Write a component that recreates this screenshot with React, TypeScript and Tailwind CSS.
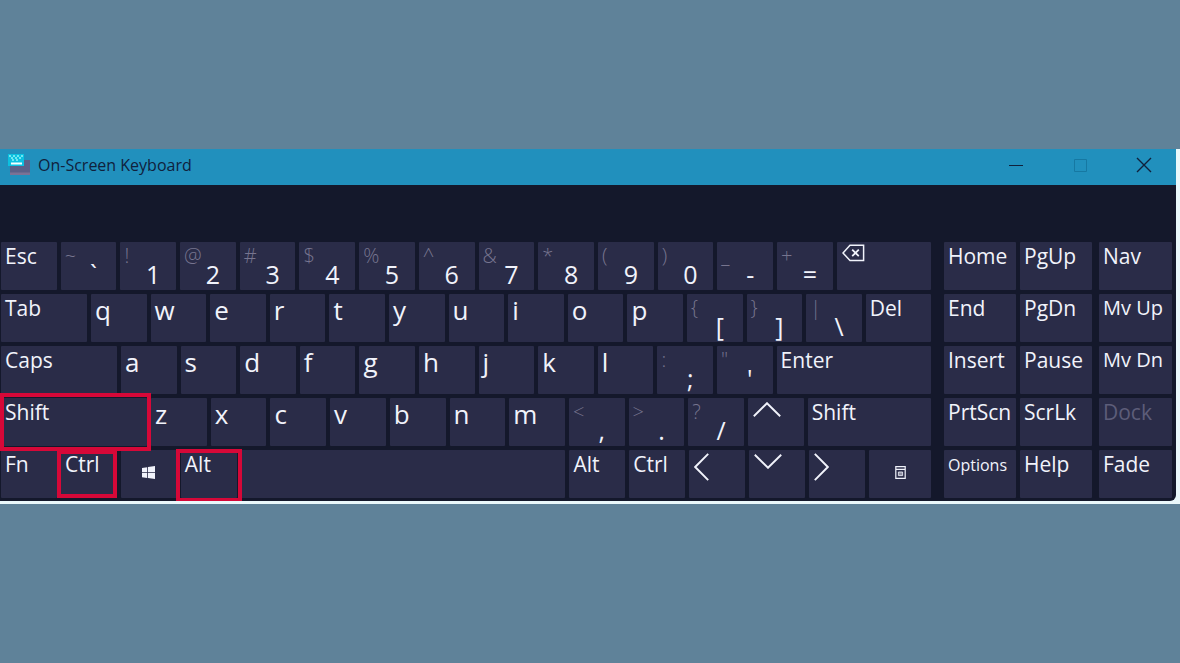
import type { ReactNode } from 'react'
import clsx from 'clsx'

interface KeyDef {
  label?: string
  hint?: string
  icon?: ReactNode
  name?: string
  size?: 'letter' | 'label' | 'medium' | 'small'
  mark?: string
  center?: boolean
  disabled?: boolean
}

const sizes = {
  letter: 'text-[26px] leading-8',
  label: 'text-[21px] leading-7',
  medium: 'text-[20px] leading-7',
  small: 'text-[16px] leading-[30px]',
}

const letters = (text: string): KeyDef[] => text.split('').map((label) => ({ label, size: 'letter' }))

const pairs = (text: string): KeyDef[] => text.split(' ').map((p) => ({ hint: p[0], label: p[1] }))

function Chevron({ d, wide }: { d: string; wide?: boolean }) {
  return (
    <svg
      className={wide ? 'mt-1 ml-px h-[15px] w-7' : 'mt-[3px] ml-px h-7 w-[15px]'}
      viewBox={wide ? '0 0 28 15' : '0 0 15 28'}
      fill="none"
      stroke="currentColor"
      strokeWidth={1.9}
    >
      <path d={d} />
    </svg>
  )
}

function BackspaceIcon() {
  return (
    <svg className="mt-0.5 ml-px h-[18px] w-[23px]" viewBox="0 0 23 18" fill="none" stroke="currentColor" strokeWidth={1.5}>
      <path d="M8 1.3h13.6v15.2H8L1 9z" />
      <path d="M10.2 5.6l6.6 6.6M16.8 5.6l-6.6 6.6" strokeWidth={1.8} />
    </svg>
  )
}

function WindowsIcon() {
  return (
    <svg className="h-[13px] w-[13px]" viewBox="0 0 13 13" fill="currentColor">
      <path d="M0 2l5.2-.8v5H0zM6 1.1L13 0v6.2H6zM0 7h5.2v5L0 11.2zM6 7h7v6l-7-1z" />
    </svg>
  )
}

function MenuIcon() {
  return (
    <svg className="h-[13px] w-[11px]" viewBox="0 0 11 13" fill="none" stroke="currentColor" strokeWidth={1.2}>
      <path d="M.8.7h9.4v11.6H.8zM.8 3.4h9.4" />
      <path d="M3.4 6h4.2v3.6H3.4z" fill="currentColor" fillOpacity={0.5} strokeWidth={0.8} />
    </svg>
  )
}

function KeyboardIcon() {
  return (
    <svg className="h-[21px] w-[22px]" viewBox="0 0 22 21">
      <path d="M2 6h20v15H2z" fill="#5c6087" />
      <path d="M2 18.5h20V21H2z" fill="#7c7295" />
      <path d="M0 0h16v12H0z" fill="#0cc0e0" />
      <path d="M1 2h2M5 2h2M9 2h2M13 2h2M3 4h2M7 4h2M11 4h2M4 6h2M8 6h2" stroke="#8ff4f8" strokeWidth={1.5} />
      <path d="M3 9.5h11" stroke="#f4ffff" strokeWidth={1.8} />
    </svg>
  )
}

const numberRow: KeyDef[] = [
  { label: 'Esc' },
  ...pairs('~` !1 @2 #3 $4 %5 ^6 &7 *8 (9 )0 _- +='),
  { icon: <BackspaceIcon />, name: 'Backspace' },
]

const topRow: KeyDef[] = [{ label: 'Tab' }, ...letters('qwertyuiop'), ...pairs('{[ }] |\\'), { label: 'Del' }]

const homeRow: KeyDef[] = [{ label: 'Caps' }, ...letters('asdfghjkl'), ...pairs(`:; "'`), { label: 'Enter' }]

const lowerRow: KeyDef[] = [
  { label: 'Shift', mark: '-left-px -right-1 -inset-y-[5px]' },
  ...letters('zxcvbnm'),
  ...pairs('<, >. ?/'),
  { icon: <Chevron wide d="M.8 14.2L14 1.2l13.2 13" />, name: 'Up' },
  { label: 'Shift' },
]

const bottomRow: KeyDef[] = [
  { label: 'Fn' },
  { label: 'Ctrl', mark: '-left-1 right-0 inset-y-0' },
  { icon: <WindowsIcon />, name: 'Windows', center: true },
  { label: 'Alt', mark: '-inset-x-[5px] -top-px -bottom-1' },
  { name: 'Space' },
  { label: 'Alt' },
  { label: 'Ctrl' },
  { icon: <Chevron d="M14.2.8L1.2 14l13 13.2" />, name: 'Left' },
  { icon: <Chevron wide d="M.8.8L14 13.8 27.2.8" />, name: 'Down' },
  { icon: <Chevron d="M.8.8L13.8 14 .8 27.2" />, name: 'Right' },
  { icon: <MenuIcon />, name: 'Menu', center: true },
]

const mainRows = [
  { cols: 'grid-cols-[repeat(14,557fr)_943fr]', keys: numberRow },
  { cols: 'grid-cols-[860fr_repeat(13,556fr)_652fr]', keys: topRow },
  { cols: 'grid-cols-[1160fr_repeat(11,556fr)_1544fr]', keys: homeRow },
  { cols: 'grid-cols-[1460fr_repeat(11,557fr)_1233fr]', keys: lowerRow },
  { cols: 'grid-cols-[repeat(4,56fr)_325fr_repeat(5,56fr)_62fr]', keys: bottomRow },
]

const navKeys: KeyDef[] = [
  { label: 'Home' },
  { label: 'PgUp' },
  { label: 'End' },
  { label: 'PgDn' },
  { label: 'Insert' },
  { label: 'Pause' },
  { label: 'PrtScn' },
  { label: 'ScrLk' },
  { label: 'Options', size: 'small' },
  { label: 'Help' },
]

const panelKeys: KeyDef[] = [
  { label: 'Nav' },
  { label: 'Mv Up', size: 'medium' },
  { label: 'Mv Dn', size: 'medium' },
  { label: 'Dock', disabled: true },
  { label: 'Fade' },
]

function Key({ k }: { k: KeyDef }) {
  return (
    <button
      type="button"
      aria-label={k.name}
      disabled={k.disabled}
      className={clsx(
        'relative grid h-12 min-w-0 rounded-[1px] bg-[#2a2c48] whitespace-nowrap hover:bg-[#35375a]',
        k.center ? 'place-items-center pb-1' : 'content-start justify-items-start pl-1',
        k.disabled ? 'text-[#5d5d79]' : 'text-[#f1f3fb]'
      )}
    >
      {k.icon}
      {k.hint ? (
        <span className="grid h-12 w-full">
          <span className="col-start-1 row-start-1 text-left text-[20px] leading-7 font-light text-[#77758f]">
            {k.hint}
          </span>
          <span className="col-start-1 row-start-1 self-end pb-1 pl-1.5 text-center text-[25px] leading-6">
            {k.label}
          </span>
        </span>
      ) : (
        k.label && <span className={sizes[k.size ?? 'label']}>{k.label}</span>
      )}
      {k.mark && <span className={clsx('pointer-events-none absolute z-10 border-4 border-[#d60838]', k.mark)} />}
    </button>
  )
}

function TitleBar() {
  return (
    <header className="flex h-9 items-center bg-[#2190bd] pr-6 pb-[5px] pl-2 text-[#10213c]">
      <KeyboardIcon />
      <h1 className="ml-2 flex-1 text-[16px] leading-5">On-Screen Keyboard</h1>
      <div className="flex items-center gap-12">
        <button type="button" aria-label="Minimize">
          <svg className="h-4 w-4" viewBox="0 0 16 16" stroke="currentColor">
            <path d="M1 8.5h14" />
          </svg>
        </button>
        <button type="button" aria-label="Maximize" disabled className="text-[#1678a2]">
          <svg className="h-4 w-4" viewBox="0 0 16 16" fill="none" stroke="currentColor">
            <path d="M2.5 2.5h12v12h-12z" />
          </svg>
        </button>
        <button type="button" aria-label="Close">
          <svg className="h-4 w-4" viewBox="0 0 16 16" stroke="currentColor" strokeWidth={1.4}>
            <path d="M1 1l14 14M15 1L1 15" />
          </svg>
        </button>
      </div>
    </header>
  )
}

export default function App() {
  return (
    <div className="min-h-screen bg-[#5f8299] pt-[149px] font-['Open_Sans','Noto_Sans',sans-serif]">
      <main className="bg-[#eaf8fb] pr-1 pb-[3px]">
        <div className="overflow-hidden rounded-br-md bg-[#14182b]">
          <TitleBar />
          <div className="flex gap-[13px] pt-[57px] pr-1 pb-[3px] pl-px">
            <div className="flex min-w-0 flex-[930] flex-col gap-1">
              {mainRows.map((row, i) => (
                <div key={i} className={clsx('grid gap-1', row.cols)}>
                  {row.keys.map((k, j) => (
                    <Key key={j} k={k} />
                  ))}
                </div>
              ))}
            </div>
            <div className="flex min-w-0 flex-[228] gap-[7px]">
              <div className="grid min-w-0 flex-[148] grid-cols-2 gap-1">
                {navKeys.map((k) => (
                  <Key key={k.label} k={k} />
                ))}
              </div>
              <div className="grid min-w-0 flex-[73] gap-1">
                {panelKeys.map((k) => (
                  <Key key={k.label} k={k} />
                ))}
              </div>
            </div>
          </div>
        </div>
      </main>
    </div>
  )
}
